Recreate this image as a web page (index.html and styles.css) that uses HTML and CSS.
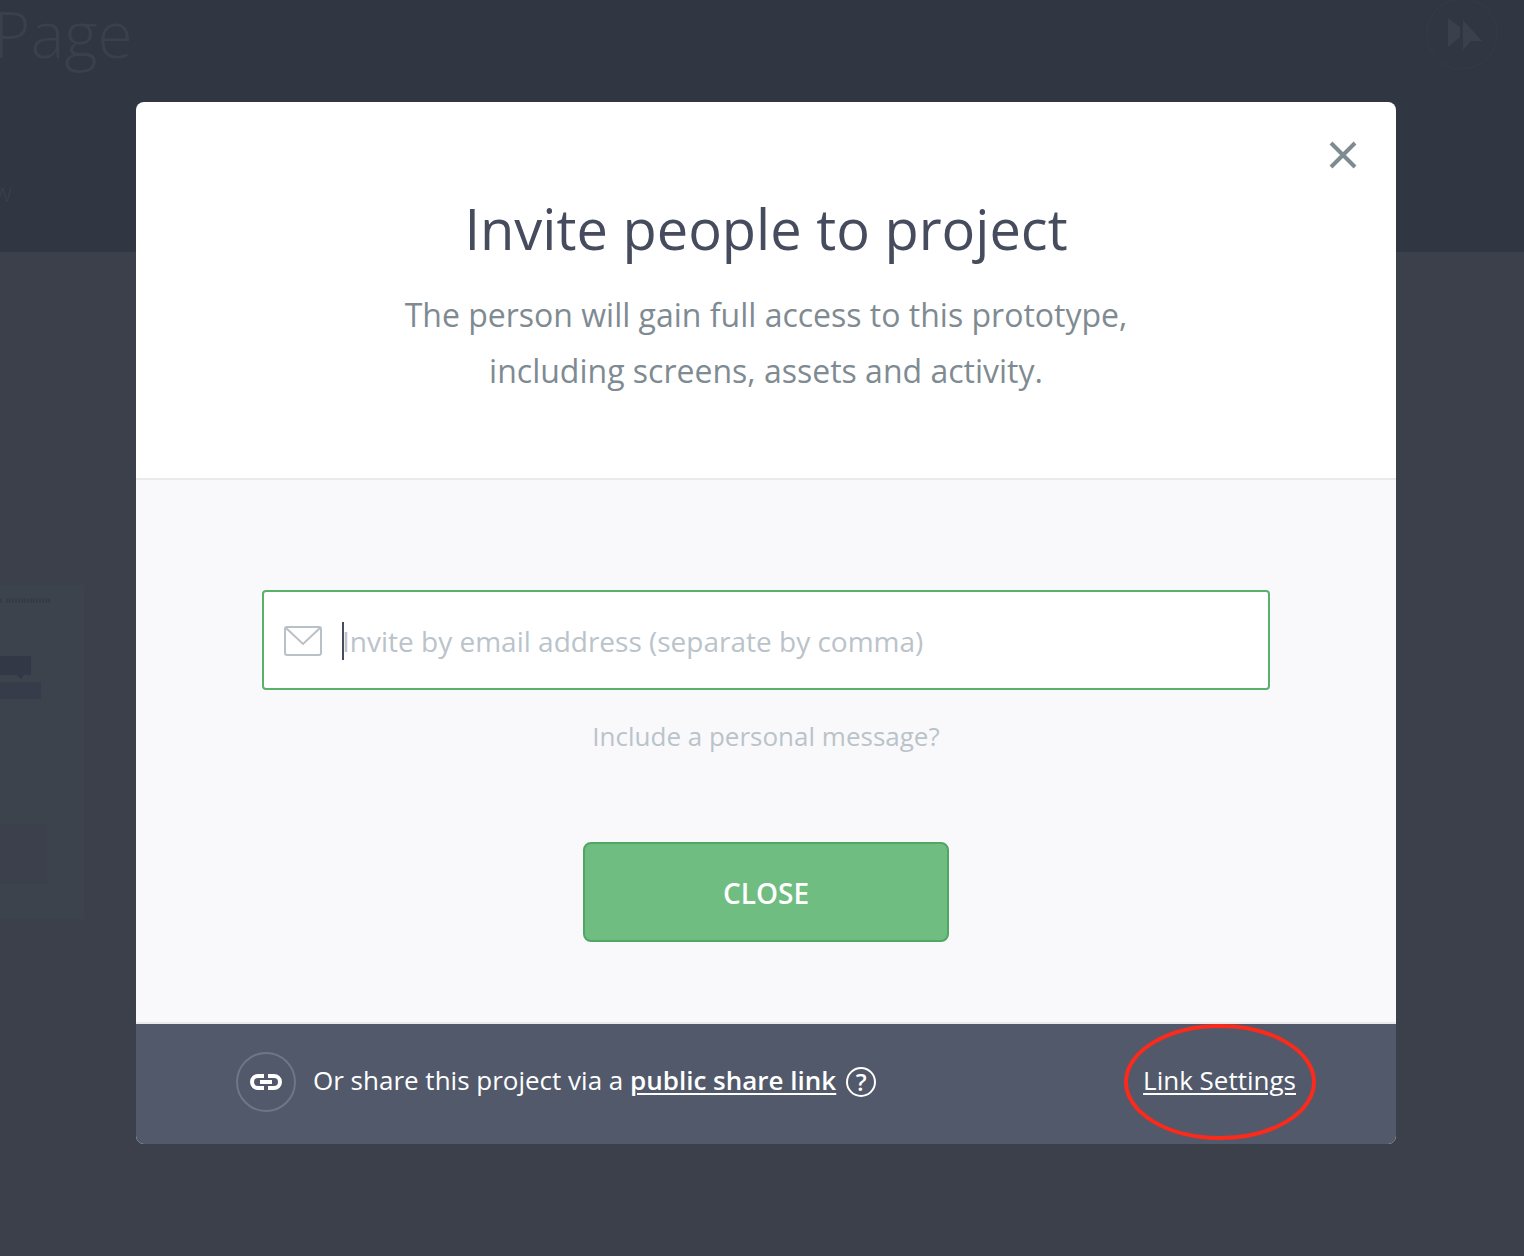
FILE: index.html
```
<!DOCTYPE html>
<html lang="en">
<head>
  <meta charset="UTF-8">
  <meta name="viewport" content="width=device-width, initial-scale=1.0">
  <title>Invite people to project</title>
  <link rel="stylesheet" href="styles.css">
</head>
<body>

  <div class="page" aria-hidden="true">
    <header class="page-header">
      <div>
        <div class="page-title">Page</div>
        <div class="page-tab">w</div>
      </div>
      <svg class="play" width="72" height="72" viewBox="0 0 72 72">
        <circle cx="36" cy="36" r="35" fill="none" stroke="#373e4a" stroke-dasharray="3 1"/>
        <path d="M22 20l12 9v10L22 49zM37 22l19 21-11 0-8 9z" fill="#3a414c"/>
      </svg>
    </header>
    <div class="screens">
      <svg class="thumb" width="84" height="334" viewBox="0 0 84 334">
        <rect width="84" height="334" fill="#3c434c"/>
        <path d="M0 16h3M6 15.500h45" stroke="#343b47" stroke-width="4" stroke-dasharray="2 1"/>
        <path d="M0 71h31v19h-7l-3 4-4-4H0z" fill="#323845"/>
        <path d="M0 97h41v17H0z" fill="#363c49"/>
        <path d="M0 239h47v60H0z" fill="#3b404c"/>
      </svg>
    </div>
  </div>

  <div class="overlay">
    <div class="modal" role="dialog" aria-labelledby="modalTitle">
      <div class="modal-header">
        <button type="button" class="close-icon" aria-label="Close dialog">
          <svg width="28" height="28" viewBox="0 0 28 28">
            <path d="M2 2l24 24M26 2L2 26" stroke="#7f8b92" stroke-width="4"/>
          </svg>
        </button>
        <h1 id="modalTitle">Invite people to project</h1>
        <p>The person will gain full access to this prototype,<br>including screens, assets and activity.</p>
      </div>

      <form class="modal-body">
        <label class="email-field" for="email">
          <svg width="38" height="30" viewBox="0 0 38 30" fill="none" stroke="#b8c1c8" stroke-width="2">
            <rect x="1" y="1" width="36" height="28" rx="2"/>
            <path d="M2 2l17 16L36 2"/>
          </svg>
          <span class="input-wrap">
            <input type="text" id="email" aria-label="Email addresses" placeholder="Invite by email address (separate by comma)">
            <span class="caret"></span>
          </span>
        </label>
        <a href="#" class="message-link">Include a personal message?</a>
        <button type="button" class="close-button">CLOSE</button>
      </form>

      <div class="modal-footer">
        <svg class="link-icon" width="60" height="60" viewBox="0 0 60 60" fill="none">
          <circle cx="30" cy="30" r="29" stroke="#6e7785" stroke-width="2"/>
          <path d="M28 24h-6a6 6 0 0 0 0 12h6M32 24h6a6 6 0 0 1 0 12h-6M24 30h12" stroke="#fff" stroke-width="4"/>
        </svg>
        <span class="share-text">Or share this project via a <a href="#" class="share-link">public share link</a></span>
        <button type="button" class="help">?</button>
        <span class="settings">
          <a href="#">Link Settings</a>
          <svg class="marker" width="192" height="116" viewBox="0 0 192 116">
            <ellipse cx="96" cy="58" rx="94" ry="56" fill="none" stroke="#fb2a1b" stroke-width="4"/>
          </svg>
        </span>
      </div>
    </div>
  </div>

</body>
</html>
```
FILE: styles.css
```
* {
  box-sizing: border-box;
}
body {
  margin: 0;
  position: relative;
  min-height: 100vh;
  background: #3b404b;
  font-family: 'Open Sans', sans-serif;
  overflow-x: hidden;
}
button {
  font-family: inherit;
  cursor: pointer;
}

/* page behind the dialog */
.page {
  position: absolute;
  inset: 0;
  overflow: hidden;
}
.page-header {
  display: flex;
  justify-content: space-between;
  align-items: flex-start;
  height: 252px;
  padding-right: 26px;
  background: #303642;
  color: #3a404c;
}
.page-title {
  margin-left: -7px;
  font-size: 64px;
  font-weight: 300;
  line-height: 68px;
}
.page-tab {
  margin: 108px 0 0 -7px;
  font-size: 26px;
  font-weight: 300;
  line-height: 32px;
}
.play {
  margin-top: -2px;
}
.screens {
  padding-top: 333px;
}
.thumb {
  display: block;
}

/* dialog */
.overlay {
  position: relative;
  padding: 102px 128px 112px 136px;
}
.modal {
  border-radius: 8px;
  overflow: hidden;
  background: #fff;
}
.modal-header {
  position: relative;
  padding: 86px 40px 79px;
  border-bottom: 2px solid #e8eaec;
  text-align: center;
}
.close-icon {
  position: absolute;
  top: 39px;
  right: 39px;
  padding: 0;
  border: none;
  background: none;
}
.close-icon svg {
  display: block;
}
h1 {
  margin: 0 0 19px;
  font-size: 56px;
  font-weight: 400;
  line-height: 80px;
  color: #464c5e;
}
.modal-header p {
  margin: 0;
  font-size: 32px;
  line-height: 56px;
  color: #7f8b92;
}
.modal-body {
  display: flex;
  flex-direction: column;
  align-items: center;
  padding: 110px 126px 80px;
  border-bottom: 2px solid #e8eaec;
  background: #f9f9fb;
}
.email-field {
  display: flex;
  align-items: center;
  gap: 20px;
  width: 100%;
  height: 100px;
  padding: 2px 20px 0;
  border: 2px solid #58b06b;
  border-radius: 4px;
  background: #fff;
}
.input-wrap {
  position: relative;
  flex: 1;
}
.input-wrap input {
  display: block;
  width: 100%;
  padding: 0;
  border: none;
  outline: none;
  background: none;
  font-family: inherit;
  font-size: 28px;
  line-height: 40px;
  color: #464c5e;
}
.input-wrap input::placeholder {
  color: #bac3ca;
  opacity: 1;
}
.caret {
  position: absolute;
  top: 1px;
  left: 0;
  width: 2px;
  height: 38px;
  background: #464c5e;
}
.message-link {
  margin: 27px 0 87px;
  font-size: 26px;
  line-height: 38px;
  color: #bac3ca;
  text-decoration: none;
}
.close-button {
  width: 366px;
  height: 100px;
  padding: 2px 0 0;
  border: 2px solid #4fa763;
  border-radius: 8px;
  background: #6fbd80;
  color: #fff;
  font-size: 28px;
  font-weight: 600;
}
.modal-footer {
  display: flex;
  align-items: center;
  height: 120px;
  padding: 0 100px 4px;
  background: #51596b;
  color: #fff;
  font-size: 26px;
  line-height: 40px;
}
.modal-footer a {
  color: #fff;
  text-underline-offset: 3px;
  text-decoration-thickness: 2px;
}
.share-text,
.settings {
  padding-bottom: 4px;
}
.share-text {
  margin: 0 10px 0 17px;
}
.share-link {
  font-weight: 600;
}
.help {
  width: 30px;
  height: 30px;
  padding: 0;
  border: 2px solid #fff;
  border-radius: 50%;
  background: none;
  color: #fff;
  font-size: 24px;
  font-weight: 600;
  line-height: 24px;
}
.settings {
  position: relative;
  margin-left: auto;
}
.marker {
  position: absolute;
  top: -36px;
  left: -19px;
  pointer-events: none;
}
```
